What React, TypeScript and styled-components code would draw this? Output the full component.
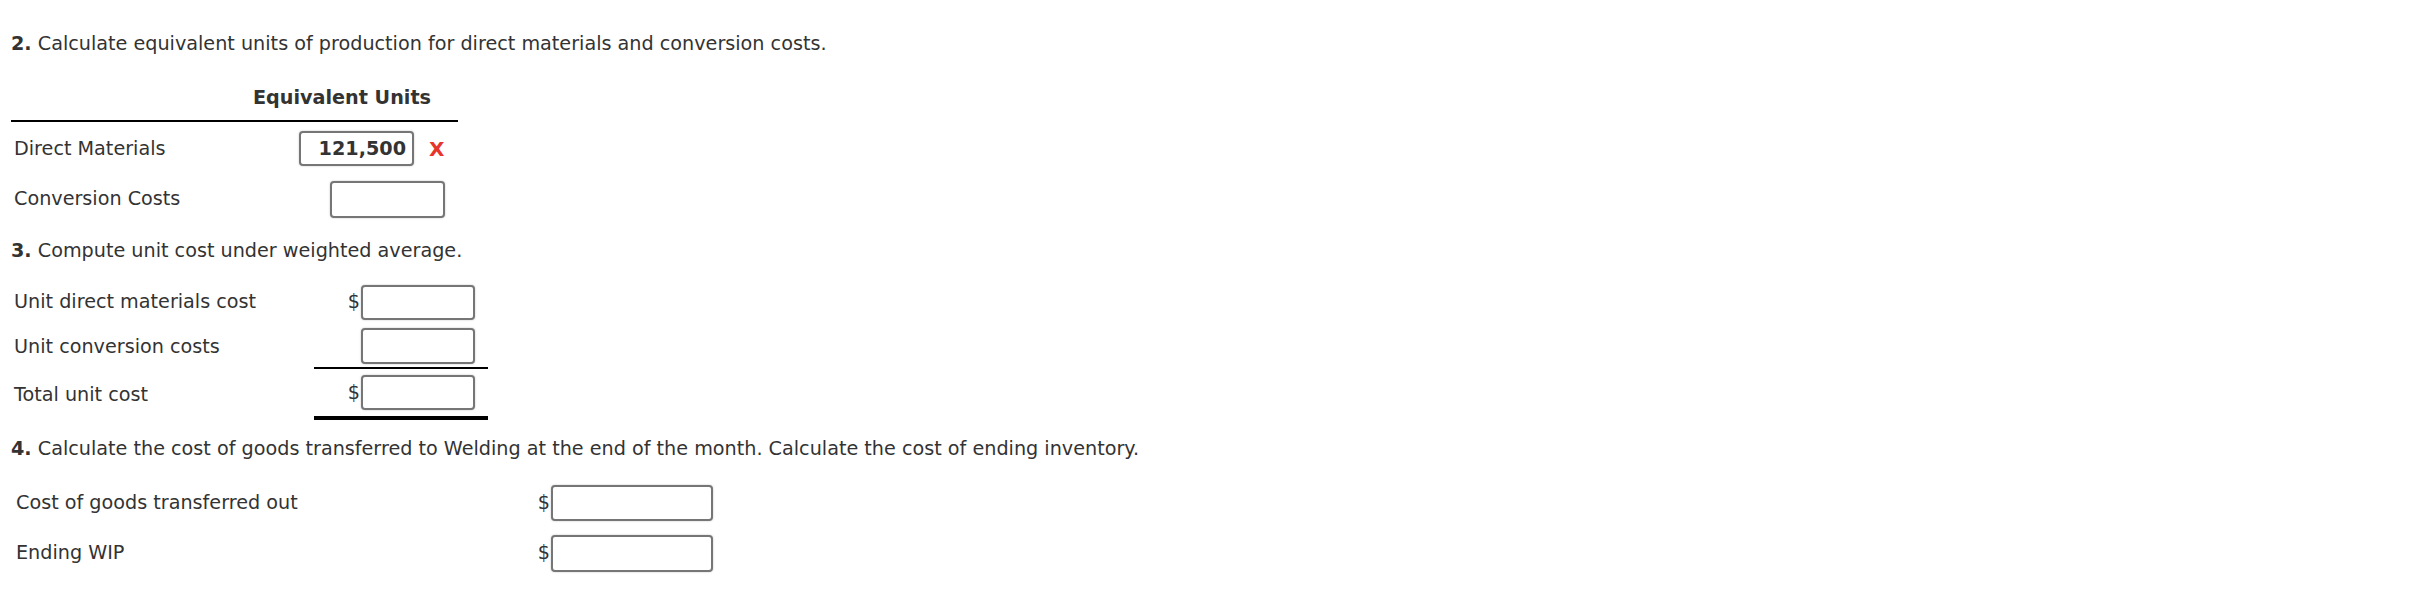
import React from "react";
import styled, { createGlobalStyle } from "styled-components";

const GlobalStyle = createGlobalStyle`
  html, body {
    margin: 0;
    padding: 0;
    background: #ffffff;
  }
  body {
    font-family: "DejaVu Sans", Verdana, sans-serif;
    color: #333333;
  }
`;

const Page = styled.div`
  width: 2434px;
  height: 590px;
  box-sizing: border-box;
  padding-left: 11px;
  overflow: hidden;
`;

const Heading = styled.p<{ $top: number }>`
  margin: ${(p) => p.$top}px 0 0 0;
  font-size: 19.2px;
  line-height: 24px;
  color: #333333;
  white-space: nowrap;

  b {
    font-weight: bold;
  }
`;

const Table = styled.div<{ $label: number; $value: number; $top: number }>`
  display: grid;
  grid-template-columns: ${(p) => p.$label}px ${(p) => p.$value}px;
  margin-top: ${(p) => p.$top}px;
  font-size: 19.2px;
`;

const HeadCell = styled.div`
  height: 66px;
  box-sizing: border-box;
  display: flex;
  align-items: flex-end;
  justify-content: center;
  padding-bottom: 10px;
  border-bottom: 2px solid #000;
  font-weight: bold;
  line-height: 24px;
`;

const Label = styled.div<{ $h: number; $indent: number }>`
  height: ${(p) => p.$h}px;
  display: flex;
  align-items: center;
  padding-left: ${(p) => p.$indent}px;
  line-height: 24px;
  white-space: nowrap;
`;

const Value = styled.div<{ $h: number; $rule?: number }>`
  height: ${(p) => p.$h}px;
  box-sizing: border-box;
  display: flex;
  align-items: center;
  justify-content: flex-end;
  padding-right: 13px;
  border-bottom: ${(p) => (p.$rule ? `${p.$rule}px solid #000` : "none")};
`;

const Dollar = styled.span`
  font-size: 19.2px;
  line-height: 24px;
  margin-right: 1px;
  color: #333333;
`;

const Field = styled.div<{ $w: number; $h: number }>`
  width: ${(p) => p.$w}px;
  height: ${(p) => p.$h}px;
  box-sizing: border-box;
  border: 2px solid #767676;
  border-radius: 4px;
  background: #fff;
  box-shadow: 0 0 2px rgba(0, 0, 0, 0.25);
  display: flex;
  align-items: center;
  justify-content: flex-end;
  padding-right: 6px;
  font-weight: bold;
  font-size: 19.2px;
  color: #333333;
`;

const Wrong = styled.span`
  margin-left: 15px;
  color: #e8352c;
  font-weight: bold;
  font-size: 20px;
  line-height: 24px;
  width: 16px;
`;

export default function App() {
  return (
    <>
      <GlobalStyle />
      <Page>
        <Heading $top={32}>
          <b>2.</b> Calculate equivalent units of production for direct materials and conversion costs.
        </Heading>

        <Table $label={215} $value={232} $top={0}>
          <HeadCell />
          <HeadCell>Equivalent Units</HeadCell>

          <Label $h={53} $indent={3}>Direct Materials</Label>
          <Value $h={53}>
            <Field $w={115} $h={35}>121,500</Field>
            <Wrong>X</Wrong>
          </Value>

          <Label $h={48} $indent={3}>Conversion Costs</Label>
          <Value $h={48}>
            <Field $w={115} $h={37} />
          </Value>
        </Table>

        <Heading $top={16}>
          <b>3.</b> Compute unit cost under weighted average.
        </Heading>

        <Table $label={303} $value={174} $top={17}>
          <Label $h={44} $indent={3}>Unit direct materials cost</Label>
          <Value $h={44}>
            <Dollar>$</Dollar>
            <Field $w={114} $h={35} />
          </Value>

          <Label $h={45} $indent={3}>Unit conversion costs</Label>
          <Value $h={45} $rule={2}>
            <Field $w={114} $h={36} />
          </Value>

          <Label $h={51} $indent={3}>Total unit cost</Label>
          <Value $h={51} $rule={4}>
            <Dollar>$</Dollar>
            <Field $w={114} $h={35} />
          </Value>
        </Table>

        <Heading $top={17}>
          <b>4.</b> Calculate the cost of goods transferred to Welding at the end of the month. Calculate the cost of ending inventory.
        </Heading>

        <Table $label={513} $value={202} $top={16}>
          <Label $h={51} $indent={5}>Cost of goods transferred out</Label>
          <Value $h={51}>
            <Dollar>$</Dollar>
            <Field $w={162} $h={36} />
          </Value>

          <Label $h={50} $indent={5}>Ending WIP</Label>
          <Value $h={50}>
            <Dollar>$</Dollar>
            <Field $w={162} $h={37} />
          </Value>
        </Table>
      </Page>
    </>
  );
}
